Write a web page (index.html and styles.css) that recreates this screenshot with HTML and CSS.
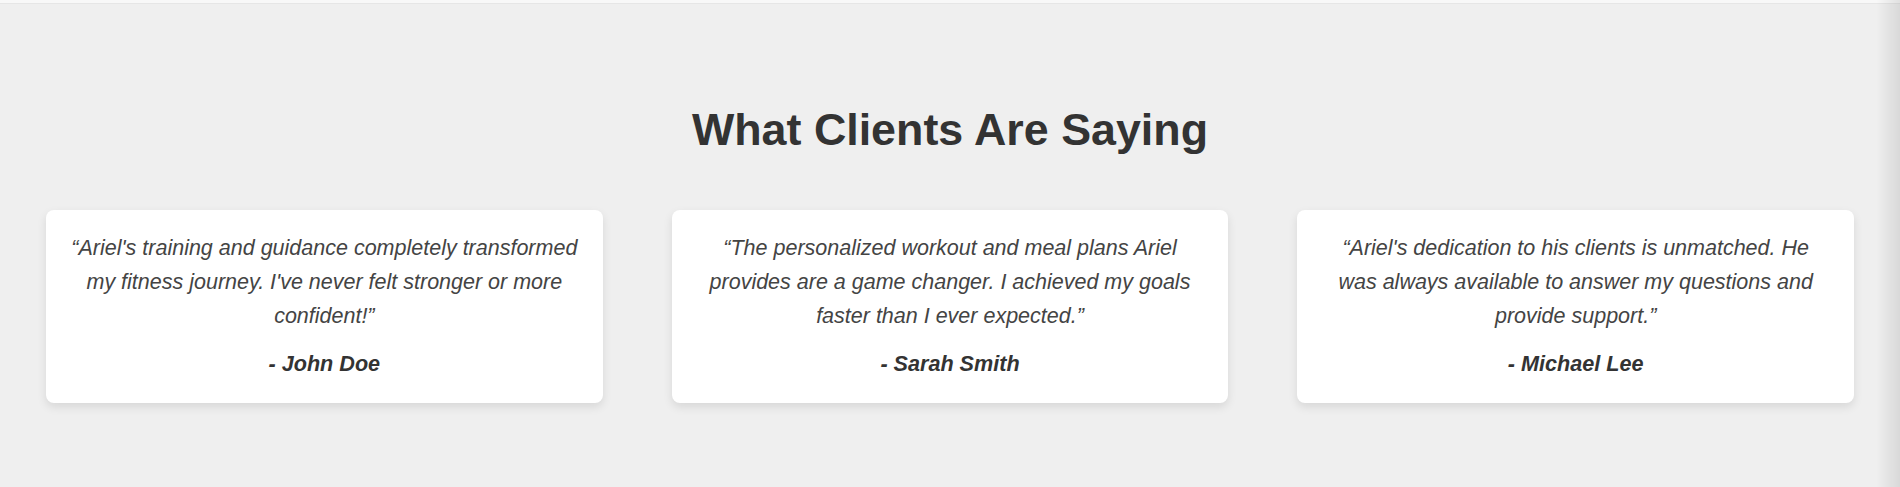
FILE: index.html
```html
<!DOCTYPE html>
<html lang="en">
<head>
<meta charset="utf-8">
<title>Testimonials</title>
<link rel="stylesheet" href="styles.css">
</head>
<body>
<div class="topbar"></div>
<section class="testimonials">
  <h2 class="title">What Clients Are Saying</h2>
  <div class="grid">
    <div class="card">
      <p class="quote">“Ariel's training and guidance completely transformed my fitness journey. I've never felt stronger or more confident!”</p>
      <p class="author">- John Doe</p>
    </div>
    <div class="card">
      <p class="quote">“The personalized workout and meal plans Ariel provides are a game changer. I achieved my goals faster than I ever expected.”</p>
      <p class="author">- Sarah Smith</p>
    </div>
    <div class="card">
      <p class="quote">“Ariel's dedication to his clients is unmatched. He was always available to answer my questions and provide support.”</p>
      <p class="author">- Michael Lee</p>
    </div>
  </div>
</section>
<div class="edge-shadow"></div>
</body>
</html>
```
FILE: styles.css
```css
* { box-sizing: border-box; }
html, body { margin: 0; padding: 0; }
body {
  background: #efefef;
  font-family: "Liberation Sans", Arial, sans-serif;
  color: #333;
  height: 487px;
  overflow: hidden;
}
.topbar {
  height: 4px;
  background: #f8f8f8;
  border-bottom: 1px solid #e6e6e6;
}
.testimonials {
  padding: 0 46px;
  text-align: center;
}
.title {
  margin: 0;
  padding-top: 98px;
  font-size: 44.8px;
  line-height: 54px;
  font-weight: bold;
  color: #333;
}
.grid {
  display: grid;
  grid-template-columns: repeat(3, 1fr);
  gap: 69px;
  margin-top: 54px;
}
.card {
  background: #fff;
  border-radius: 8px;
  box-shadow: 0 4px 10px rgba(0, 0, 0, 0.1);
  padding: 21px 24.5px 20px;
  height: 193px;
}
.quote {
  margin: 0 0 14px;
  font-style: italic;
  font-size: 21.5px;
  line-height: 34px;
  color: #444;
}
.author {
  margin: 0;
  font-style: italic;
  font-weight: bold;
  font-size: 21.6px;
  line-height: 34px;
  color: #333;
}
.edge-shadow {
  position: fixed;
  top: 0;
  right: 0;
  width: 24px;
  height: 100%;
  background: linear-gradient(to right, rgba(0,0,0,0), rgba(0,0,0,0.09));
  pointer-events: none;
}
```
